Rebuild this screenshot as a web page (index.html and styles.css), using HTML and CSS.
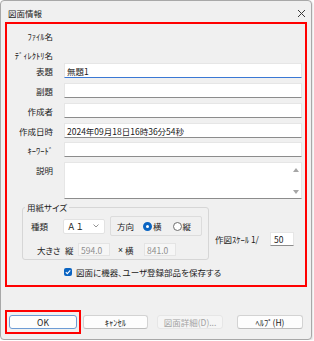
FILE: index.html
```html
<!DOCTYPE html>
<html lang="ja">
<head>
    <meta charset="UTF-8">
    <title>図面情報</title>
    <link rel="stylesheet" href="styles.css">
</head>
<body>

<div class="dialog">
    <div class="titlebar">
        <span class="title">図面情報</span>
        <svg class="close" width="9" height="9" viewBox="0 0 9 9">
            <path d="M1 1L8 8M8 1L1 8" stroke="#3a3a3a" stroke-width="1" fill="none"/>
        </svg>
    </div>

    <div class="main">
        <!-- 基本情報 -->
        <div class="row"><label>ﾌｧｲﾙ名</label><span></span></div>
        <div class="row row-dir"><label>ﾃﾞｨﾚｸﾄﾘ名</label><span></span></div>
        <div class="row row-title"><label>表題</label><div class="field focus">無題1</div></div>
        <div class="row"><label>副題</label><div class="field"></div></div>
        <div class="row"><label>作成者</label><div class="field"></div></div>
        <div class="row"><label>作成日時</label><div class="field">2024年09月18日16時36分54秒</div></div>
        <div class="row row-kw"><label>ｷｰﾜｰﾄﾞ</label><div class="field"></div></div>
        <div class="row row-memo">
            <label>説明</label>
            <div class="memo">
                <div class="memo-text"></div>
                <div class="memo-bar">
                    <span class="arrow-up"></span>
                    <span class="arrow-down"></span>
                </div>
            </div>
        </div>

        <!-- 用紙サイズ -->
        <div class="paper-row">
            <fieldset class="paper">
                <legend>用紙サイズ</legend>
                <div class="paper-line1">
                    <span class="kind-label">種類</span>
                    <div class="select">
                        <span class="select-value">Ａ１</span>
                        <svg width="6" height="4" viewBox="0 0 6 4">
                            <path d="M0.5 0.5L3 3L5.5 0.5" stroke="#777" stroke-width="0.8" fill="none"/>
                        </svg>
                    </div>
                    <div class="dir">
                        <span>方向</span>
                        <span class="radio checked"></span><span class="radio-text">横</span>
                        <span class="radio radio-second"></span><span class="radio-text">縦</span>
                    </div>
                </div>
                <div class="paper-line2">
                    <span class="size-label">大きさ</span>
                    <span class="tate">縦</span>
                    <div class="num">594.0</div>
                    <span class="times">×</span>
                    <span class="yoko">横</span>
                    <div class="num">841.0</div>
                </div>
            </fieldset>
            <div class="scale">
                <span class="scale-label">作図ｽｹｰﾙ 1/</span>
                <div class="scale-input">50</div>
            </div>
        </div>

        <div class="check-row">
            <span class="checkbox">
                <svg width="8" height="8" viewBox="0 0 8 8">
                    <path d="M1.8 4.1L3.3 5.6L6.3 2.4" stroke="#fff" stroke-width="1.1" fill="none"/>
                </svg>
            </span>
            <span class="check-text">図面に機器、ユーザ登録部品を保存する</span>
        </div>
    </div>

    <div class="buttons">
        <div class="ok-mark"><button class="btn btn-ok" type="button">OK</button></div>
        <button class="btn btn-cancel" type="button">ｷｬﾝｾﾙ</button>
        <button class="btn btn-detail" type="button" disabled>図面詳細(D)...</button>
        <button class="btn btn-help" type="button">ﾍﾙﾌﾟ(H)</button>
    </div>
</div>

</body>
</html>
```

FILE: styles.css
```css
body {
    margin: 0;
    background: #fff;
    font-family: "Noto Sans CJK JP", "Noto Sans", sans-serif;
    font-size: 8.5px;
    color: #1b1b1b;
    font-feature-settings: "palt";
}
.dialog {
    width: 312px;
    height: 340px;
    box-sizing: border-box;
    border: 1px solid #a8a8a8;
    border-radius: 4px;
    background: #f0f0f0;
    box-shadow: 1px 1px 2px rgba(0, 0, 0, 0.12);
}
.titlebar {
    height: 21px;
    box-sizing: border-box;
    padding: 3px 5px 0 7px;
    display: flex;
    align-items: center;
    justify-content: space-between;
}
.main {
    height: 265px;
    margin: 0 4px;
    box-sizing: border-box;
    border: 2px solid #f00;
    padding: 4px 3px 0 0;
}
.row {
    display: grid;
    grid-template-columns: 46px 1fr;
    column-gap: 11px;
    height: 15px;
    align-items: center;
}
.row + .row {
    margin-top: 5px;
}
.row label {
    text-align: right;
    white-space: nowrap;
}
.main .row-dir {
    margin-top: 4px;
}
.main .row-title {
    margin-top: 1px;
}
.main .row-kw {
    margin-top: 4px;
}
.field {
    height: 15px;
    box-sizing: border-box;
    background: #fff;
    border: 1px solid #e6e6e6;
    border-bottom-color: #8c8c8c;
    padding: 0 2px;
    display: flex;
    align-items: center;
    white-space: nowrap;
}
.field.focus {
    border-bottom-color: #3b78d4;
}
.row-memo {
    height: 37px;
    align-items: start;
}
.row-memo label {
    margin-top: 2px;
}
.memo {
    height: 37px;
    box-sizing: border-box;
    background: #fff;
    border: 1px solid #e6e6e6;
    border-bottom-color: #8c8c8c;
    display: flex;
}
.memo-text {
    flex: 1;
}
.memo-bar {
    width: 11px;
    display: flex;
    flex-direction: column;
    align-items: center;
    justify-content: space-between;
    padding: 5px 0 4px;
}
.arrow-up,
.arrow-down {
    width: 0;
    height: 0;
    border-left: 3px solid transparent;
    border-right: 3px solid transparent;
}
.arrow-up {
    border-bottom: 4px solid #a6a6a6;
}
.arrow-down {
    border-top: 4px solid #a6a6a6;
}
.paper-row {
    display: flex;
    margin-top: 2px;
}
.paper {
    width: 187px;
    box-sizing: border-box;
    margin: 0 0 0 15px;
    padding: 0 0 3px 2px;
    border: 1px solid #d6d6d6;
    border-radius: 3px;
    min-width: 0;
}
.paper legend {
    padding: 0 2px;
    line-height: 12px;
}
.paper-line1 {
    display: flex;
    align-items: center;
    height: 20px;
    margin-top: 3px;
    padding-left: 6px;
}
.kind-label {
    width: 32px;
}
.select {
    width: 42px;
    height: 15px;
    box-sizing: border-box;
    background: #fff;
    border: 1px solid #e2e2e2;
    border-radius: 2px;
    display: flex;
    align-items: center;
    justify-content: space-between;
    padding: 0 5px 0 3px;
}
.select-value {
    font-feature-settings: normal;
}
.dir {
    width: 92px;
    height: 20px;
    box-sizing: border-box;
    margin-left: 5px;
    border: 1px solid #dcdcdc;
    border-radius: 2px;
    display: flex;
    align-items: center;
    padding-left: 6px;
}
.radio {
    width: 9px;
    height: 9px;
    box-sizing: border-box;
    border-radius: 50%;
    border: 1px solid #6e6e6e;
    background: #fff;
    margin-left: 9px;
}
.radio.checked {
    border: 3px solid #0a64c2;
}
.radio-second {
    margin-left: 11px;
}
.radio-text {
    margin-left: 1px;
}
.paper-line2 {
    display: flex;
    align-items: center;
    height: 13px;
    margin-top: 7px;
    padding-left: 12px;
}
.size-label {
    width: 28px;
}
.tate {
    width: 13px;
}
.num {
    width: 32px;
    height: 13px;
    box-sizing: border-box;
    background: #f6f6f6;
    border: 1px solid #e4e4e4;
    color: #8e8e8e;
    padding-left: 2px;
    display: flex;
    align-items: center;
}
.times {
    margin-left: 8px;
    width: 7px;
    font-family: "Liberation Sans", sans-serif;
}
.yoko {
    width: 19px;
}
.scale {
    display: flex;
    align-items: center;
    height: 14px;
    margin: 31px 0 0 6px;
}
.scale-label {
    width: 55px;
    white-space: nowrap;
}
.scale-input {
    width: 24px;
    height: 14px;
    box-sizing: border-box;
    background: #fff;
    border: 1px solid #e6e6e6;
    border-bottom-color: #8c8c8c;
    padding-left: 3px;
    display: flex;
    align-items: center;
}
.check-row {
    display: flex;
    align-items: center;
    height: 13px;
    margin-top: 5px;
    padding-left: 57px;
}
.checkbox {
    width: 8px;
    height: 8px;
    border-radius: 2px;
    background: #0a64c2;
    display: flex;
}
.check-text {
    margin-left: 4px;
    white-space: nowrap;
}
.buttons {
    display: flex;
    align-items: center;
    padding: 23px 0 0 4px;
}
.ok-mark {
    border: 2px solid #f00;
    padding: 3px 2px;
    display: flex;
}
.btn {
    height: 14px;
    box-sizing: border-box;
    padding: 0;
    font: inherit;
    color: #1b1b1b;
    background: #fdfdfd;
    border: 1px solid #d3d3d3;
    border-bottom-color: #bdbdbd;
    border-radius: 3px;
    line-height: 12px;
}
.btn-ok {
    width: 68px;
    border-color: #6d9bd4;
}
.btn-cancel {
    width: 65px;
    margin-left: 2px;
}
.btn-detail {
    width: 66px;
    margin-left: 9px;
    background: #f5f5f5;
    border-color: #e6e6e6;
    color: #a3a3a3;
}
.btn-help {
    width: 66px;
    margin-left: 14px;
}
```
